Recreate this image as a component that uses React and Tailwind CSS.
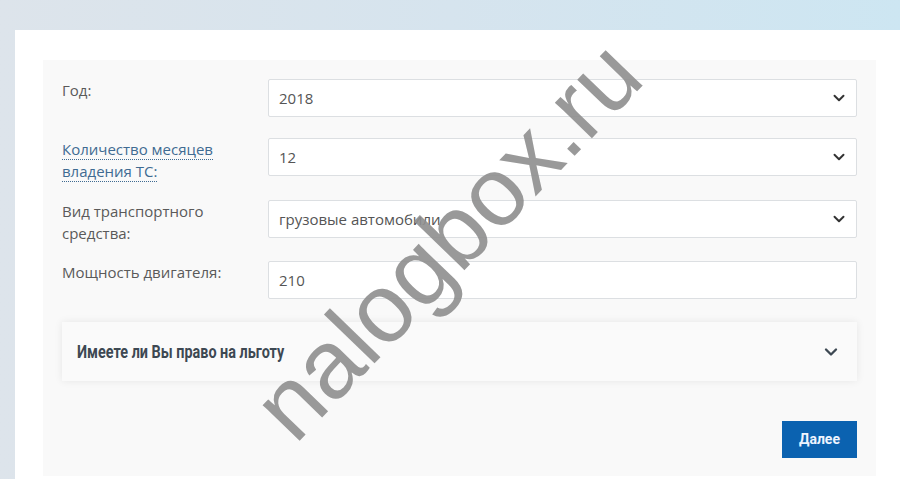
import { ChevronDown } from 'lucide-react';

const labelFont = { fontFamily: '"Open Sans", "Liberation Sans", sans-serif' };

function SelectBox({ value }) {
  return (
    <div className="flex h-[38px] w-[589px] items-center justify-between rounded-[2px] border border-[#dcdfe2] bg-white pl-[10px] pr-[8px] text-[15px] text-[#555]">
      <span>{value}</span>
      <ChevronDown className="h-[18px] w-[18px] text-[#333]" strokeWidth={2.6} />
    </div>
  );
}

function TextBox({ value }) {
  return (
    <div className="flex h-[38px] w-[589px] items-center rounded-[2px] border border-[#dcdfe2] bg-white pl-[10px] text-[15px] text-[#555]">
      {value}
    </div>
  );
}

export default function App() {
  return (
    <div
      className="relative h-[479px] w-[900px] overflow-hidden bg-gradient-to-r from-[#dde4eb] via-[#d6e4ee] to-[#cde6f2]"
      style={labelFont}
    >
      <div className="ml-[15px] mt-[30px] h-[449px] bg-white pl-[28px] pt-[30px]">
        <div className="w-[833px] bg-[#f9f9f9] px-[19px] pb-[18px] pt-[19px]">
          <div className="flex h-[59px]">
            <div className="w-[206px] text-[15px] leading-[22px] text-[#5a5a5a]">Год:</div>
            <SelectBox value="2018" />
          </div>
          <div className="flex h-[62px]">
            <div className="w-[206px] text-[15px] leading-[22px] text-[#3f6b92]">
              <span className="border-b border-dotted border-[#3f6b92]">Количество месяцев владения ТС:</span>
            </div>
            <SelectBox value="12" />
          </div>
          <div className="flex h-[61px]">
            <div className="w-[206px] pr-[40px] text-[15px] leading-[22px] text-[#5a5a5a]">Вид транспортного средства:</div>
            <SelectBox value="грузовые автомобили" />
          </div>
          <div className="flex h-[38px]">
            <div className="w-[206px] text-[15px] leading-[22px] text-[#5a5a5a]">Мощность двигателя:</div>
            <TextBox value="210" />
          </div>

          <div className="mt-[23px] flex h-[59px] items-center justify-between bg-[#fafafa] pl-[15px] pr-[16px] shadow-[0_0_8px_rgba(0,0,0,0.08)]">
            <span
              className="origin-left scale-x-[0.8] text-[18px] font-bold text-[#3d4852]"
              style={{ fontFamily: 'Roboto, "Liberation Sans", sans-serif' }}
            >
              Имеете ли Вы право на льготу
            </span>
            <ChevronDown className="h-[20px] w-[20px] text-[#3d4852]" strokeWidth={2.8} />
          </div>

          <div className="mt-[40px] flex justify-end">
            <button
              className="h-[37px] w-[75px] bg-[#0b62b0] text-[14px] font-bold text-[#eef4ff]"
              style={{ fontFamily: 'Roboto, "Liberation Sans", sans-serif' }}
            >
              Далее
            </button>
          </div>
        </div>
      </div>

      <div
        className="pointer-events-none absolute left-[447px] top-[240px] -translate-x-1/2 -translate-y-1/2 -rotate-[46deg] whitespace-nowrap text-[97px] leading-none text-[#8e8e8e]/90"
        style={{ fontFamily: '"Liberation Sans", Arial, sans-serif' }}
      >
        nalogbox.ru
      </div>
    </div>
  );
}
